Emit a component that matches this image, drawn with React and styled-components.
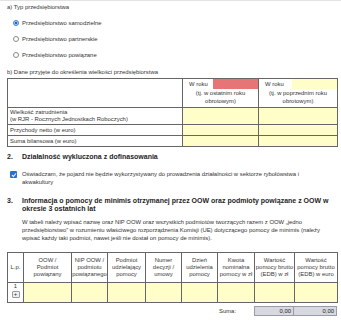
import React from "react";
import styled, { createGlobalStyle } from "styled-components";

const GlobalStyle = createGlobalStyle`
  body {
    margin: 0;
    background: #ffffff;
    font-family: "Liberation Sans", Arial, sans-serif;
    font-size: 5.9px;
    color: #333333;
  }
`;

const YELLOW = "#fffdc8";

const Page = styled.div`
  width: 341px;
  height: 320px;
  box-sizing: border-box;
  border-top: 1px solid #e2e2e2;
  padding: 2px 4px 0 7px;
  overflow: hidden;
`;

const SubLabel = styled.div`
  line-height: 8px;
  margin-top: ${(p) => p.$top || 0}px;
`;

const RadioList = styled.div`
  margin-top: 4px;
  padding-left: 6px;
`;

const RadioRow = styled.label`
  display: flex;
  align-items: center;
  gap: 3px;
  height: 16px;
`;

const RadioDot = styled.span`
  width: 6px;
  height: 6px;
  box-sizing: border-box;
  border-radius: 50%;
  border: 1px solid ${(p) => (p.$checked ? "#3d7fd6" : "#8a8a8a")};
  background: ${(p) =>
    p.$checked
      ? "radial-gradient(circle, #1f62d0 0 1.4px, #bcd6f6 1.6px)"
      : "#ffffff"};
`;

const Table = styled.table`
  border-collapse: collapse;
  table-layout: fixed;
  width: 330px;
  margin-top: ${(p) => p.$top || 0}px;
  td, th {
    border: 1px solid #666666;
    padding: 0;
    font-weight: normal;
  }
`;

const LabelCell = styled.td`
  padding: 0 2px !important;
  line-height: 7px;
  vertical-align: middle;
  height: ${(p) => p.$h}px;
`;

const InputCell = styled.td`
  background: ${YELLOW};
`;

const YearHead = styled.th`
  vertical-align: top;
  text-align: center;
  line-height: 7.5px;
`;

const YearLine = styled.div`
  display: flex;
  align-items: stretch;
  height: 10px;
  margin-bottom: 1px;
  text-align: left;
`;

const YearText = styled.span`
  flex: 1;
  padding-left: 6px;
  line-height: 10px;
`;

const YearBox = styled.span`
  width: 45px;
  background: ${(p) => p.$color};
`;

const SectionTitle = styled.div`
  display: grid;
  grid-template-columns: 15px 1fr;
  font-size: 7px;
  font-weight: bold;
  color: #1e1e1e;
  line-height: 8px;
  margin-top: ${(p) => p.$top}px;
`;

const Indented = styled.div`
  padding-left: 15px;
  line-height: 8px;
  margin-top: ${(p) => p.$top}px;
  position: relative;
`;

const CheckBox = styled.span`
  position: absolute;
  left: 3px;
  top: 1px;
  width: 7px;
  height: 7px;
  border-radius: 1px;
  background: #2a6fd4;
  display: flex;
  align-items: center;
  justify-content: center;
`;

const AidHead = styled.th`
  height: 29px;
  text-align: center;
  vertical-align: middle;
  line-height: 7px;
  color: #3a3a3a;
`;

const LpCell = styled.td`
  height: 19px;
  text-align: center;
  vertical-align: top;
  line-height: 7px;
`;

const AddButton = styled.div`
  width: 8px;
  height: 7px;
  margin: 1px auto 0;
  box-sizing: border-box;
  border: 1px solid #9a9a9a;
  border-radius: 1px;
  background: #f0f0f0;
  font-size: 6px;
  line-height: 5px;
  text-align: center;
`;

const SumRow = styled.div`
  display: flex;
  justify-content: flex-end;
  align-items: center;
  margin-top: 3px;
  width: 330px;
  height: 10px;
`;

const SumLabel = styled.span`
  width: 35px;
  padding-left: 2px;
`;

const SumCell = styled.span`
  width: ${(p) => p.$w}px;
  height: 10px;
  box-sizing: border-box;
  border: 1px solid #9a9aaa;
  background: #d8d8e0;
  text-align: right;
  padding-right: 2px;
  line-height: 8px;
  color: #222;
  & + & {
    border-left: none;
  }
`;

const aidColumns = [
  { w: 16, label: ["L.p."] },
  { w: 48, label: ["OOW /", "Podmiot", "powiązany"] },
  { w: 36, label: ["NIP OOW /", "podmiotu", "powiązanego"] },
  { w: 38, label: ["Podmiot", "udzielający", "pomocy"] },
  { w: 36, label: ["Numer", "decyzji /", "umowy"] },
  { w: 36, label: ["Dzień", "udzielenia", "pomocy"] },
  { w: 37, label: ["Kwota", "nominalna", "pomocy w zł"] },
  { w: 40, label: ["Wartość", "pomocy brutto", "(EDB) w zł"] },
  { w: 43, label: ["Wartość", "pomocy brutto", "(EDB) w euro"] },
];

const lines = (arr) =>
  arr.map((t, i) => (
    <React.Fragment key={i}>
      {i > 0 && <br />}
      {t}
    </React.Fragment>
  ));

const App = () => {
  const types = [
    { label: "Przedsiębiorstwo samodzielne", checked: true },
    { label: "Przedsiębiorstwo partnerskie", checked: false },
    { label: "Przedsiębiorstwo powiązane", checked: false },
  ];

  return (
    <>
      <GlobalStyle />
      <Page>
        <SubLabel>a) Typ przedsiębiorstwa</SubLabel>
        <RadioList>
          {types.map((t) => (
            <RadioRow key={t.label}>
              <RadioDot $checked={t.checked} />
              {t.label}
            </RadioRow>
          ))}
        </RadioList>

        <SubLabel $top={5}>b) Dane przyjęte do określenia wielkości przedsiębiorstwa</SubLabel>
        <Table $top={2}>
          <colgroup>
            <col style={{ width: 175 }} />
            <col style={{ width: 76 }} />
            <col style={{ width: 79 }} />
          </colgroup>
          <tbody>
            <tr>
              <LabelCell $h={28} />
              <YearHead>
                <YearLine>
                  <YearText>W roku</YearText>
                  <YearBox $color="#e87575" />
                </YearLine>
                (tj. w ostatnim roku
                <br />
                obrotowym)
              </YearHead>
              <YearHead>
                <YearLine>
                  <YearText>W roku</YearText>
                  <YearBox $color={YELLOW} />
                </YearLine>
                (tj. w poprzednim roku
                <br />
                obrotowym)
              </YearHead>
            </tr>
            <tr>
              <LabelCell $h={16}>
                Wielkość zatrudnienia
                <br />
                (w RJR - Rocznych Jednostkach Roboczych)
              </LabelCell>
              <InputCell />
              <InputCell />
            </tr>
            <tr>
              <LabelCell $h={10}>Przychody netto (w euro)</LabelCell>
              <InputCell />
              <InputCell />
            </tr>
            <tr>
              <LabelCell $h={10}>Suma bilansowa (w euro)</LabelCell>
              <InputCell />
              <InputCell />
            </tr>
          </tbody>
        </Table>

        <SectionTitle $top={6}>
          <span>2.</span>
          <span>Działalność wykluczona z dofinasowania</span>
        </SectionTitle>
        <Indented $top={9}>
          <CheckBox>
            <svg width="6" height="6" viewBox="0 0 6 6">
              <path d="M1 3.1 L2.4 4.5 L5 1.5" fill="none" stroke="#fff" strokeWidth="1.1" />
            </svg>
          </CheckBox>
          Oświadczam, że pojazd nie będzie wykorzystywany do prowadzenia działalności w sektorze rybołówstwa i
          <br />
          akwakultury
        </Indented>

        <SectionTitle $top={11}>
          <span>3.</span>
          <span>
            Informacja o pomocy de minimis otrzymanej przez OOW oraz podmioty powiązane z OOW w
            <br />
            okresie 3 ostatnich lat
          </span>
        </SectionTitle>
        <Indented $top={5}>
          W tabeli należy wpisać nazwę oraz NIP OOW oraz wszystkich podmiotów tworzących razem z OOW „jedno
          <br />
          przedsiębiorstwo” w rozumieniu właściwego rozporządzenia Komisji (UE) dotyczącego pomocy de minimis (należy
          <br />
          wpisać każdy taki podmiot, nawet jeśli nie dostał on pomocy de minimis).
        </Indented>

        <Table $top={10}>
          <colgroup>
            {aidColumns.map((c, i) => (
              <col key={i} style={{ width: c.w }} />
            ))}
          </colgroup>
          <thead>
            <tr>
              {aidColumns.map((c, i) => (
                <AidHead key={i}>{lines(c.label)}</AidHead>
              ))}
            </tr>
          </thead>
          <tbody>
            <tr>
              <LpCell>
                1
                <AddButton>+</AddButton>
              </LpCell>
              {aidColumns.slice(1).map((c, i) => (
                <InputCell key={i} />
              ))}
            </tr>
          </tbody>
        </Table>
        <SumRow>
          <SumLabel>Suma:</SumLabel>
          <SumCell $w={40}>0,00</SumCell>
          <SumCell $w={43}>0,00</SumCell>
        </SumRow>
      </Page>
    </>
  );
};

export default App;
